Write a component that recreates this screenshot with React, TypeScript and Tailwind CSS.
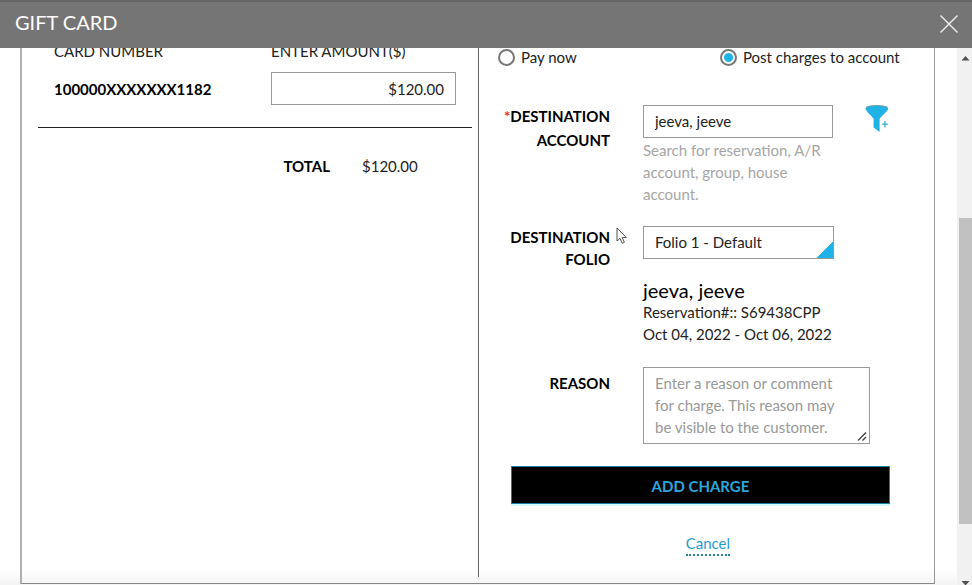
import type { ReactNode } from "react";

function CloseIcon() {
  return (
    <svg width="18" height="18" viewBox="0 0 18 18" fill="none" stroke="#f4f4f4" strokeWidth="1.3" aria-hidden="true">
      <path d="M0.5 0.5 17.5 17.5M17.5 0.5 0.5 17.5" />
    </svg>
  );
}

function FilterAddIcon() {
  return (
    <svg width="25" height="28" viewBox="0 0 25 28" aria-hidden="true">
      <path d="M0.5 3.5C1 6.5 5.5 9.5 8.6 13.8V22.5L14.6 27V13.8C17.8 9.5 22.6 6.5 23.2 3.5Z" fill="#1fb2e7" />
      <ellipse cx="11.8" cy="3.4" rx="11.4" ry="2.9" fill="#1fb2e7" />
      <path d="M1 2.4C4.5 -0.1 19 -0.1 22.7 2.4" fill="none" stroke="#7d9aa5" strokeWidth="1" />
      <path d="M20 16v6.4M16.8 19.2h6.4" stroke="#3aa9d3" strokeWidth="1.3" />
    </svg>
  );
}

function PointerIcon() {
  return (
    <svg
      className="pointer-events-none absolute -right-[18px] top-px"
      width="12"
      height="18"
      viewBox="0 0 12 18"
      fill="#f8f8f8"
      stroke="#555"
      strokeWidth="1"
      aria-hidden="true"
    >
      <path d="M1 1V14L4 11.3 6.2 16.3 8.4 15.3 6.2 10.6H10.4Z" />
    </svg>
  );
}

function GripIcon() {
  return (
    <svg
      className="pointer-events-none absolute bottom-0.5 right-0.5 bg-white"
      width="11"
      height="11"
      viewBox="0 0 11 11"
      stroke="#444"
      strokeWidth="1.4"
      aria-hidden="true"
    >
      <path d="M1 9.5 9 1.5M5.5 9.5 9 6" />
    </svg>
  );
}

function Radio({ id, label, checked }: { id: string; label: string; checked?: boolean }) {
  return (
    <div className="flex items-center gap-1.5">
      <input
        id={id}
        type="radio"
        name="payment"
        defaultChecked={checked}
        className="size-[17px] shrink-0 appearance-none rounded-full border-2 border-[#777] bg-white checked:bg-[radial-gradient(circle,#1fb2e7_4px,#fff_5px)]"
      />
      <label htmlFor={id}>{label}</label>
    </div>
  );
}

function Label({ htmlFor, children }: { htmlFor: string; children: ReactNode }) {
  return (
    <label htmlFor={htmlFor} className="relative text-right font-bold text-black">
      {children}
    </label>
  );
}

function Scrollbar() {
  return (
    <div className="flex w-[15px] shrink-0 flex-col bg-[#f1f1f1] pl-0.5" aria-hidden="true">
      <svg className="h-5 w-full shrink-0" viewBox="0 0 13 20">
        <path d="M2.5 12.5 6.5 8 10.5 12.5Z" fill="#505050" />
      </svg>
      <div className="grow-[150]" />
      <div className="grow-[306] bg-[#c1c1c1]" />
      <div className="grow-[51]" />
      <svg className="h-2.5 w-full shrink-0" viewBox="0 0 13 10">
        <path d="M2.5 6 6.5 10.5 10.5 6Z" fill="#505050" />
      </svg>
    </div>
  );
}

function CardColumn() {
  return (
    <section className="pl-4 pr-1.5">
      <table className="-mt-2 w-full table-fixed border-b border-[#222] text-left">
        <thead>
          <tr>
            <th className="w-[233px] pl-4 font-normal">CARD NUMBER</th>
            <th className="font-normal">
              <label htmlFor="amount">ENTER AMOUNT($)</label>
            </th>
          </tr>
        </thead>
        <tbody>
          <tr>
            <td className="pb-[22px] pl-4 pt-2.5 font-bold text-black">100000XXXXXXX1182</td>
            <td className="pb-[22px] pr-4 pt-2.5">
              <input
                id="amount"
                defaultValue="$120.00"
                className="block h-[33px] w-full border border-[#999] px-[11px] text-right"
              />
            </td>
          </tr>
        </tbody>
      </table>
      <dl className="mt-[27px] grid grid-cols-[292px_1fr] gap-x-8">
        <dt className="text-right font-bold text-black">TOTAL</dt>
        <dd>$120.00</dd>
      </dl>
    </section>
  );
}

function ChargeForm() {
  return (
    <form className="border-l border-[#666] pl-[19px] pr-3" onSubmit={(e) => e.preventDefault()}>
      <div className="-mt-0.5 grid grid-cols-[222px_1fr]">
        <Radio id="pay-now" label="Pay now" />
        <Radio id="post-charges" label="Post charges to account" checked />
      </div>

      <div className="mt-9 grid grid-cols-[112px_1fr] gap-x-[33px]">
        <div className="text-right leading-6">
          <Label htmlFor="account">
            <span className="text-[#f22]">*</span>DESTINATION ACCOUNT
          </Label>
        </div>
        <div className="flex items-start gap-8 pt-px">
          <div className="w-[190px]">
            <input
              id="account"
              defaultValue="jeeva, jeeve"
              className="block h-[33px] w-full border border-[#999] px-[11px] pb-0.5 text-[#222]"
            />
            <p className="mt-px text-[#a6a6a6]">Search for reservation, A/R account, group, house account.</p>
          </div>
          <button type="button" aria-label="Add filter">
            <FilterAddIcon />
          </button>
        </div>

        <div className="col-span-2 mt-[21px] grid grid-cols-subgrid">
          <Label htmlFor="folio">
            DESTINATION FOLIO
            <PointerIcon />
          </Label>
          <div>
            <select
              id="folio"
              className="block h-[33px] w-[191px] appearance-none border border-[#999] bg-[linear-gradient(135deg,transparent_50%,#1fb2e7_50%)] bg-[length:16px_16px] bg-right-bottom bg-no-repeat px-[11px] pb-0.5"
            >
              <option>Folio 1 - Default</option>
            </select>
            <p className="mt-5 text-xl leading-[22px] text-black">jeeva, jeeve</p>
            <p>Reservation#:: S69438CPP</p>
            <p>Oct 04, 2022 - Oct 06, 2022</p>
          </div>
        </div>

        <div className="col-span-2 mt-[22px] grid grid-cols-subgrid">
          <div className="pt-[5px] text-right">
            <Label htmlFor="reason">REASON</Label>
          </div>
          <div className="relative w-[227px]">
            <textarea
              id="reason"
              placeholder="Enter a reason or comment for charge. This reason may be visible to the customer."
              className="block h-[77px] w-full resize-none overflow-hidden border border-[#999] pb-[5px] pl-[11px] pr-6 pt-1 placeholder:text-[#999]"
            />
            <GripIcon />
          </div>
        </div>
      </div>

      <div className="mt-[22px] flex w-[392px] flex-col items-end pl-[13px]">
        <button
          type="submit"
          className="h-[38px] w-full border border-[#1a7f9f] bg-black pt-0.5 font-bold text-[#2ba7dc] shadow-[0_2px_0_#d5fafd]"
        >
          ADD CHARGE
        </button>
        <a href="#cancel" className="mr-40 mt-7 border-b-2 border-dotted border-[#2a7d9c] text-[#2a9bc8]">
          Cancel
        </a>
      </div>
    </form>
  );
}

export default function App() {
  return (
    <div className="flex h-screen flex-col overflow-hidden bg-white font-[Lato,sans-serif] text-[15px] leading-[22px] text-[#222]">
      <header className="flex h-12 shrink-0 items-center justify-between border-t-2 border-[#666] bg-[#757575] pb-0.5 pl-[15px] pr-3.5">
        <h1 className="pb-1 text-xl text-white">GIFT CARD</h1>
        <button type="button" aria-label="Close">
          <CloseIcon />
        </button>
      </header>
      <div className="flex min-h-0 flex-1">
        <main className="flex min-w-0 flex-1 bg-[linear-gradient(to_top,#f4f4f4,#fff_16px)] pb-px pl-5 pr-[22px]">
          <div className="grid flex-1 grid-cols-2 overflow-hidden border-b border-l-2 border-r border-b-[#888] border-l-[#b0b0b0] border-r-[#999] pb-1.5">
            <CardColumn />
            <ChargeForm />
          </div>
        </main>
        <Scrollbar />
      </div>
    </div>
  );
}
